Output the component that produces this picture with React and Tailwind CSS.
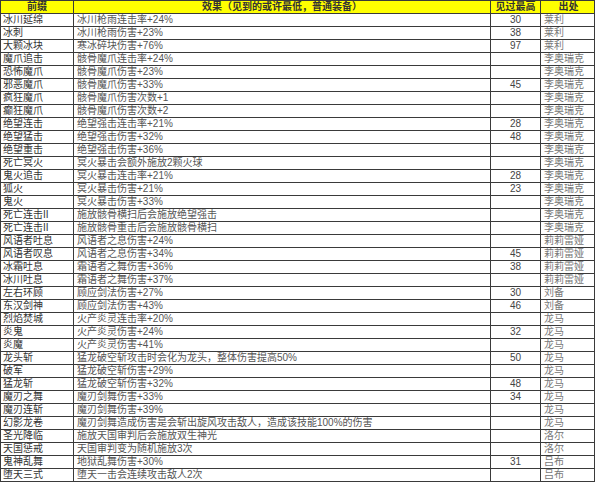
const ROWS = [
  ['冰川延绵', '冰川枪雨连击率+24%', '30', '莱利'],
  ['冰刺', '冰川枪雨伤害+23%', '38', '莱利'],
  ['大颗冰块', '寒冰碎块伤害+76%', '97', '莱利'],
  ['魔爪追击', '骸骨魔爪连击率+24%', '', '李奥瑞克'],
  ['恐怖魔爪', '骸骨魔爪伤害+23%', '', '李奥瑞克'],
  ['邪恶魔爪', '骸骨魔爪伤害+33%', '45', '李奥瑞克'],
  ['疯狂魔爪', '骸骨魔爪伤害次数+1', '', '李奥瑞克'],
  ['癫狂魔爪', '骸骨魔爪伤害次数+2', '', '李奥瑞克'],
  ['绝望连击', '绝望强击连击率+21%', '28', '李奥瑞克'],
  ['绝望猛击', '绝望强击伤害+32%', '48', '李奥瑞克'],
  ['绝望重击', '绝望强击伤害+36%', '', '李奥瑞克'],
  ['死亡冥火', '冥火暴击会额外施放2颗火球', '', '李奥瑞克'],
  ['鬼火追击', '冥火暴击连击率+21%', '28', '李奥瑞克'],
  ['狐火', '冥火暴击伤害+21%', '23', '李奥瑞克'],
  ['鬼火', '冥火暴击伤害+33%', '', '李奥瑞克'],
  ['死亡连击II', '施放骸骨横扫后会施放绝望强击', '', '李奥瑞克'],
  ['死亡连击II', '施放骸骨重击后会施放骸骨横扫', '', '李奥瑞克'],
  ['风语者吐息', '风语者之息伤害+24%', '', '莉莉雷娅'],
  ['风语者叹息', '风语者之息伤害+34%', '45', '莉莉雷娅'],
  ['冰霜吐息', '霜语者之舞伤害+36%', '38', '莉莉雷娅'],
  ['冰川吐息', '霜语者之舞伤害+37%', '', '莉莉雷娅'],
  ['左右环顾', '顾应剑法伤害+27%', '30', '刘备'],
  ['东汉剑神', '顾应剑法伤害+43%', '46', '刘备'],
  ['烈焰焚城', '火产炎灵连击率+20%', '', '龙马'],
  ['炎鬼', '火产炎灵伤害+24%', '32', '龙马'],
  ['炎魔', '火产炎灵伤害+41%', '', '龙马'],
  ['龙头斩', '猛龙破空斩攻击时会化为龙头，整体伤害提高50%', '50', '龙马'],
  ['破军', '猛龙破空斩伤害+29%', '', '龙马'],
  ['猛龙斩', '猛龙破空斩伤害+32%', '48', '龙马'],
  ['魔刃之舞', '魔刃剑舞伤害+33%', '34', '龙马'],
  ['魔刃连斩', '魔刃剑舞伤害+39%', '', '龙马'],
  ['幻影龙卷', '魔刃剑舞造成伤害是会斩出旋风攻击敌人，造成该技能100%的伤害', '', '龙马'],
  ['圣光降临', '施放天国审判后会施放双生神光', '', '洛尔'],
  ['天国惩戒', '天国审判变为随机施放3次', '', '洛尔'],
  ['鬼神乱舞', '地狱乱舞伤害+30%', '31', '吕布'],
  ['堕天三式', '堕天一击会连续攻击敌人2次', '', '吕布'],
];

const ROW = 'grid grid-cols-[73px_417px_50px_55px] h-[13px] border-b border-[#3a3a3a] leading-[12px]';

export default function App() {
  return (
    <div className="w-[600px] h-[484px] bg-white overflow-hidden font-['Liberation_Sans','Noto_Sans_CJK_SC',sans-serif] text-[10px]">
      <div className="w-[595px] border-l border-r border-t border-[#3a3a3a]">
        <div className={`${ROW} bg-[#ffff00] text-[#333] font-bold`}>
          <div className="border-r border-[#3a3a3a] text-center">前缀</div>
          <div className="border-r border-[#3a3a3a] text-center">效果（见到的或许最低，普通装备）</div>
          <div className="border-r border-[#3a3a3a] text-center">见过最高</div>
          <div className="text-center">出处</div>
        </div>
        {ROWS.map((row, i) => (
          <div key={i} className={ROW}>
            <div className="border-r border-[#3a3a3a] pl-[2px] text-[#333] whitespace-nowrap overflow-hidden">{row[0]}</div>
            <div className="border-r border-[#3a3a3a] pl-[3px] text-[#555] whitespace-nowrap overflow-hidden">{row[1]}</div>
            <div className="border-r border-[#3a3a3a] text-center text-[#444]">{row[2]}</div>
            <div className="pl-[3px] text-[#777] whitespace-nowrap">{row[3]}</div>
          </div>
        ))}
      </div>
    </div>
  );
}
